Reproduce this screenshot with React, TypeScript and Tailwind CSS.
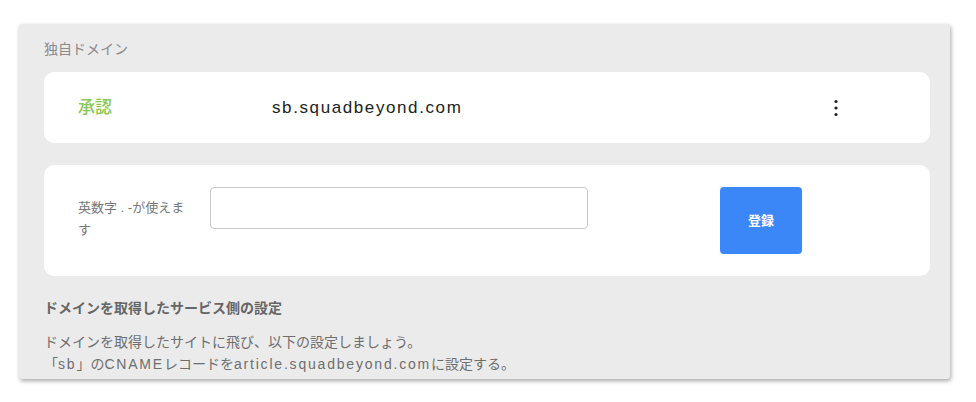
const FONT = "font-['Liberation_Sans','Noto_Sans_CJK_JP',sans-serif]";

function KebabIcon() {
  return (
    <svg width="6" height="18" viewBox="0 0 6 18" className="text-[#222]">
      <circle cx="3" cy="2.5" r="1.6" fill="currentColor" />
      <circle cx="3" cy="9" r="1.6" fill="currentColor" />
      <circle cx="3" cy="15.5" r="1.6" fill="currentColor" />
    </svg>
  );
}

export default function App() {
  return (
    <div className={`min-h-screen bg-white pt-[24px] pl-[19px] ${FONT}`}>
      <div className="h-[355px] w-[931px] overflow-hidden rounded-[3px] bg-[#ebebeb] pl-[25px] pr-[20px] pt-[15px] shadow-[1px_2px_4px_rgba(0,0,0,0.35)]">
        <div className="text-[14px] leading-[20px] text-[#8a8a8a]">独自ドメイン</div>

        {/* registered domain */}
        <div className="mt-[13px] flex h-[71px] items-center rounded-[10px] bg-white pl-[34px] pr-[89px]">
          <span className="w-[194px] text-[17px] font-medium text-[#88c857]">承認</span>
          <span className="flex-1 text-[17px] tracking-[1.6px] text-[#222]">sb.squadbeyond.com</span>
          <button className="flex w-[10px] justify-center">
            <KebabIcon />
          </button>
        </div>

        {/* new domain form */}
        <div className="mt-[22px] flex h-[111px] items-start rounded-[10px] bg-white pl-[34px] pt-[22px]">
          <label className="mt-[10px] mr-[22px] w-[110px] text-[13px] leading-[22px] text-[#777]">
            英数字 . -が使えます
          </label>
          <input
            type="text"
            className="h-[42px] w-[378px] rounded-[4px] border border-[#c8c8c8] bg-white px-3 text-[14px] outline-none"
          />
          <button className="ml-[132px] h-[67px] w-[82px] rounded-[4px] bg-[#3c87f7] text-[13px] font-bold text-white">
            登録
          </button>
        </div>

        <div className="mt-[22px] text-[14px] font-bold leading-[20px] text-[#666]">
          ドメインを取得したサービス側の設定
        </div>
        <p className="mt-[13px] text-[14px] leading-[22px] text-[#6e6e6e]">
          ドメインを取得したサイトに飛び、以下の設定しましょう。
          <br />
          「<span className="tracking-[1.8px]">sb</span>」の
          <span className="tracking-[1.8px]">CNAME</span>レコードを
          <span className="tracking-[1.8px]">article.squadbeyond.com</span>に設定する。
        </p>
      </div>
    </div>
  );
}
